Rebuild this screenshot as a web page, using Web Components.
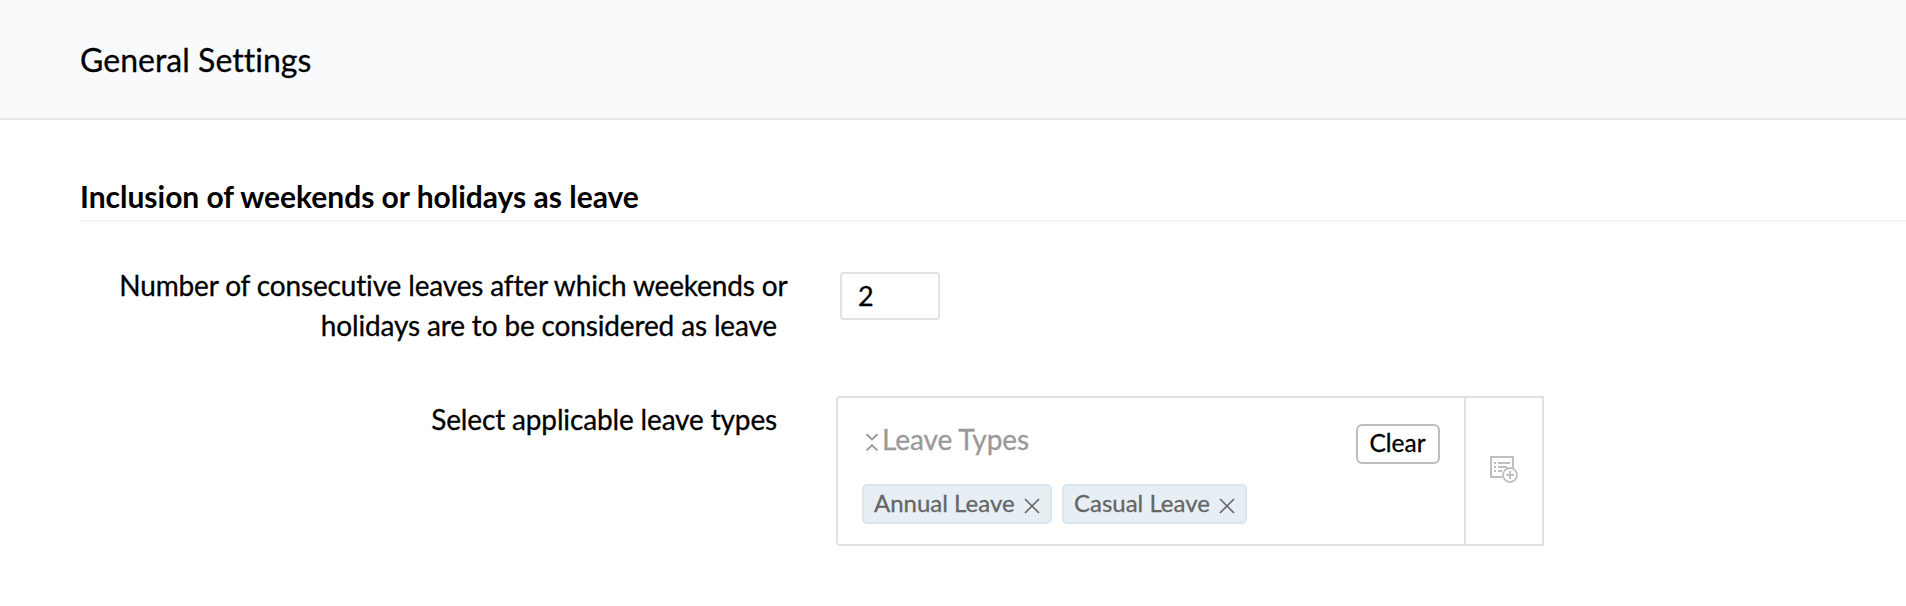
<!DOCTYPE html>
<html lang="en">
<head>
<meta charset="utf-8">
<title>General Settings</title>
<style>
body{margin:0;background:#fff;color:#000;font-family:Lato,"Liberation Sans",sans-serif;font-variant-ligatures:none;-webkit-text-stroke:.3px currentColor;}
</style>
</head>
<body>
<settings-page>
  <span slot="title">General Settings</span>
  <settings-section>
    <span slot="heading">Inclusion of weekends or holidays as leave</span>
    <settings-row style="--gap:51px;--control-top:10px">
      <span slot="label">Number of consecutive leaves after which weekends or<br>holidays are to be considered as leave<label-gap></label-gap></span>
      <number-box value="2"></number-box>
    </settings-row>
    <settings-row style="--gap:47px;--control-top:0px">
      <span slot="label">Select applicable leave types<label-gap></label-gap></span>
      <leave-picker>
        <span slot="name">Leave Types</span>
        <leave-tag>Annual Leave</leave-tag>
        <leave-tag>Casual Leave</leave-tag>
      </leave-picker>
    </settings-row>
  </settings-section>
</settings-page>
<script>
function define(name, html, setup) {
  customElements.define(name, class extends HTMLElement {
    constructor() {
      super();
      this.attachShadow({mode: "open"}).innerHTML = html;
    }
    connectedCallback() { if (setup) setup(this, this.shadowRoot); }
  });
}

define("settings-page", `
<style>
:host{display:block;min-height:606px;overflow:hidden}
header{box-sizing:border-box;height:120px;background:#f9fafc;border-bottom:2px solid #e8e8e8;padding:40px 80px 0}
h1{margin:0;font-size:32px;line-height:40px;font-weight:400;letter-spacing:.03px}
</style>
<header><h1><slot name="title"></slot></h1></header>
<main><slot></slot></main>`);

define("settings-section", `
<style>
:host{display:block;padding:56px 0 0 80px}
h2{margin:0 0 40px;height:44px;border-bottom:2px solid #f5f5f5;font-size:30px;line-height:40px;font-weight:700;letter-spacing:-.015px;-webkit-text-stroke:0}
.rows{display:flex;flex-direction:column;gap:51px}
</style>
<h2><slot name="heading"></slot></h2>
<div class="rows"><slot></slot></div>`);

define("settings-row", `
<style>
:host{display:flex;align-items:flex-start}
.label{flex:none;width:707.5px;padding-top:3px;margin-right:1.5px;font-size:28px;line-height:40px;letter-spacing:-.15px;text-align:right;white-space:nowrap}
.control{margin-left:var(--gap);padding-top:var(--control-top)}
</style>
<div class="label"><slot name="label"></slot></div>
<div class="control"><slot></slot></div>`);

define("label-gap", `<style>:host{display:inline-block;width:10.5px}</style>`);

define("number-box", `
<style>
:host{display:block}
input{display:block;box-sizing:border-box;width:100px;height:48px;margin:0;border:2px solid #e3e3e3;border-radius:4px;padding:0 16px 1px;background:#fff;color:#000;font:27px Lato,sans-serif;outline:0}
</style>
<input type="text">`, (el, root) => { root.querySelector("input").value = el.getAttribute("value"); });

define("leave-picker", `
<style>
:host{display:flex;box-sizing:border-box;width:708px;height:150px;border:2px solid #e2e2e2;border-radius:4px 0 0 4px}
.body{flex:1;padding:26px 24px 0}
.top{display:flex;align-items:flex-start;height:60px}
.fold{width:14px;height:20px;margin:8px 3px 0 3px;fill:none;stroke:#999;stroke-width:1.9}
.name{flex:1;margin-top:-2px;font-size:28px;line-height:34px;letter-spacing:-.1px;color:#999}
button{box-sizing:border-box;width:84px;height:40px;margin:0;padding:0 1px 3px 0;border:2px solid #bdbdbd;border-radius:6px;background:#fff;color:#000;font:24.5px Lato,sans-serif}
.tags{display:flex;gap:10px}
.add{flex:none;width:76px;border-left:2px solid #e2e2e2;display:grid;justify-items:start;align-items:start}
.add svg{width:28px;height:28px;margin:58px 0 0 24px;fill:none;stroke:#bfbfbf}
</style>
<div class="body">
  <div class="top">
    <svg class="fold" viewBox="0 0 14 20"><path d="M1.5 2.2L7 7.5L12.5 2.2M1.5 18.4L7 13.2L12.5 18.4"/></svg>
    <span class="name"><slot name="name"></slot></span>
    <button>Clear</button>
  </div>
  <div class="tags"><slot></slot></div>
</div>
<div class="add">
  <svg viewBox="0 0 28 28"><path stroke-width="2" d="M12.5 21H1V1H23V12M4 7H6M8 7H20M4 11H6M8 11H17M4 15H6M8 15H12"/><circle cx="20" cy="19" r="7" stroke-width="1.8"/><path stroke-width="2" d="M16 19H24M20 15V23"/></svg>
</div>`);

define("leave-tag", `
<style>
:host{display:flex;box-sizing:border-box;height:40px;border:2px solid #d8e6ee;border-radius:5px;background:#e7eff5;padding:0 10px;color:#666;font-size:24px;line-height:34px}
svg{width:16px;height:16px;margin:12px 0 0 9.3px;fill:none;stroke:#666;stroke-width:1.6}
</style>
<slot></slot><svg viewBox="0 0 16 16"><path d="M1 1L15 15M15 1L1 15"/></svg>`);
</script>
</body>
</html>
